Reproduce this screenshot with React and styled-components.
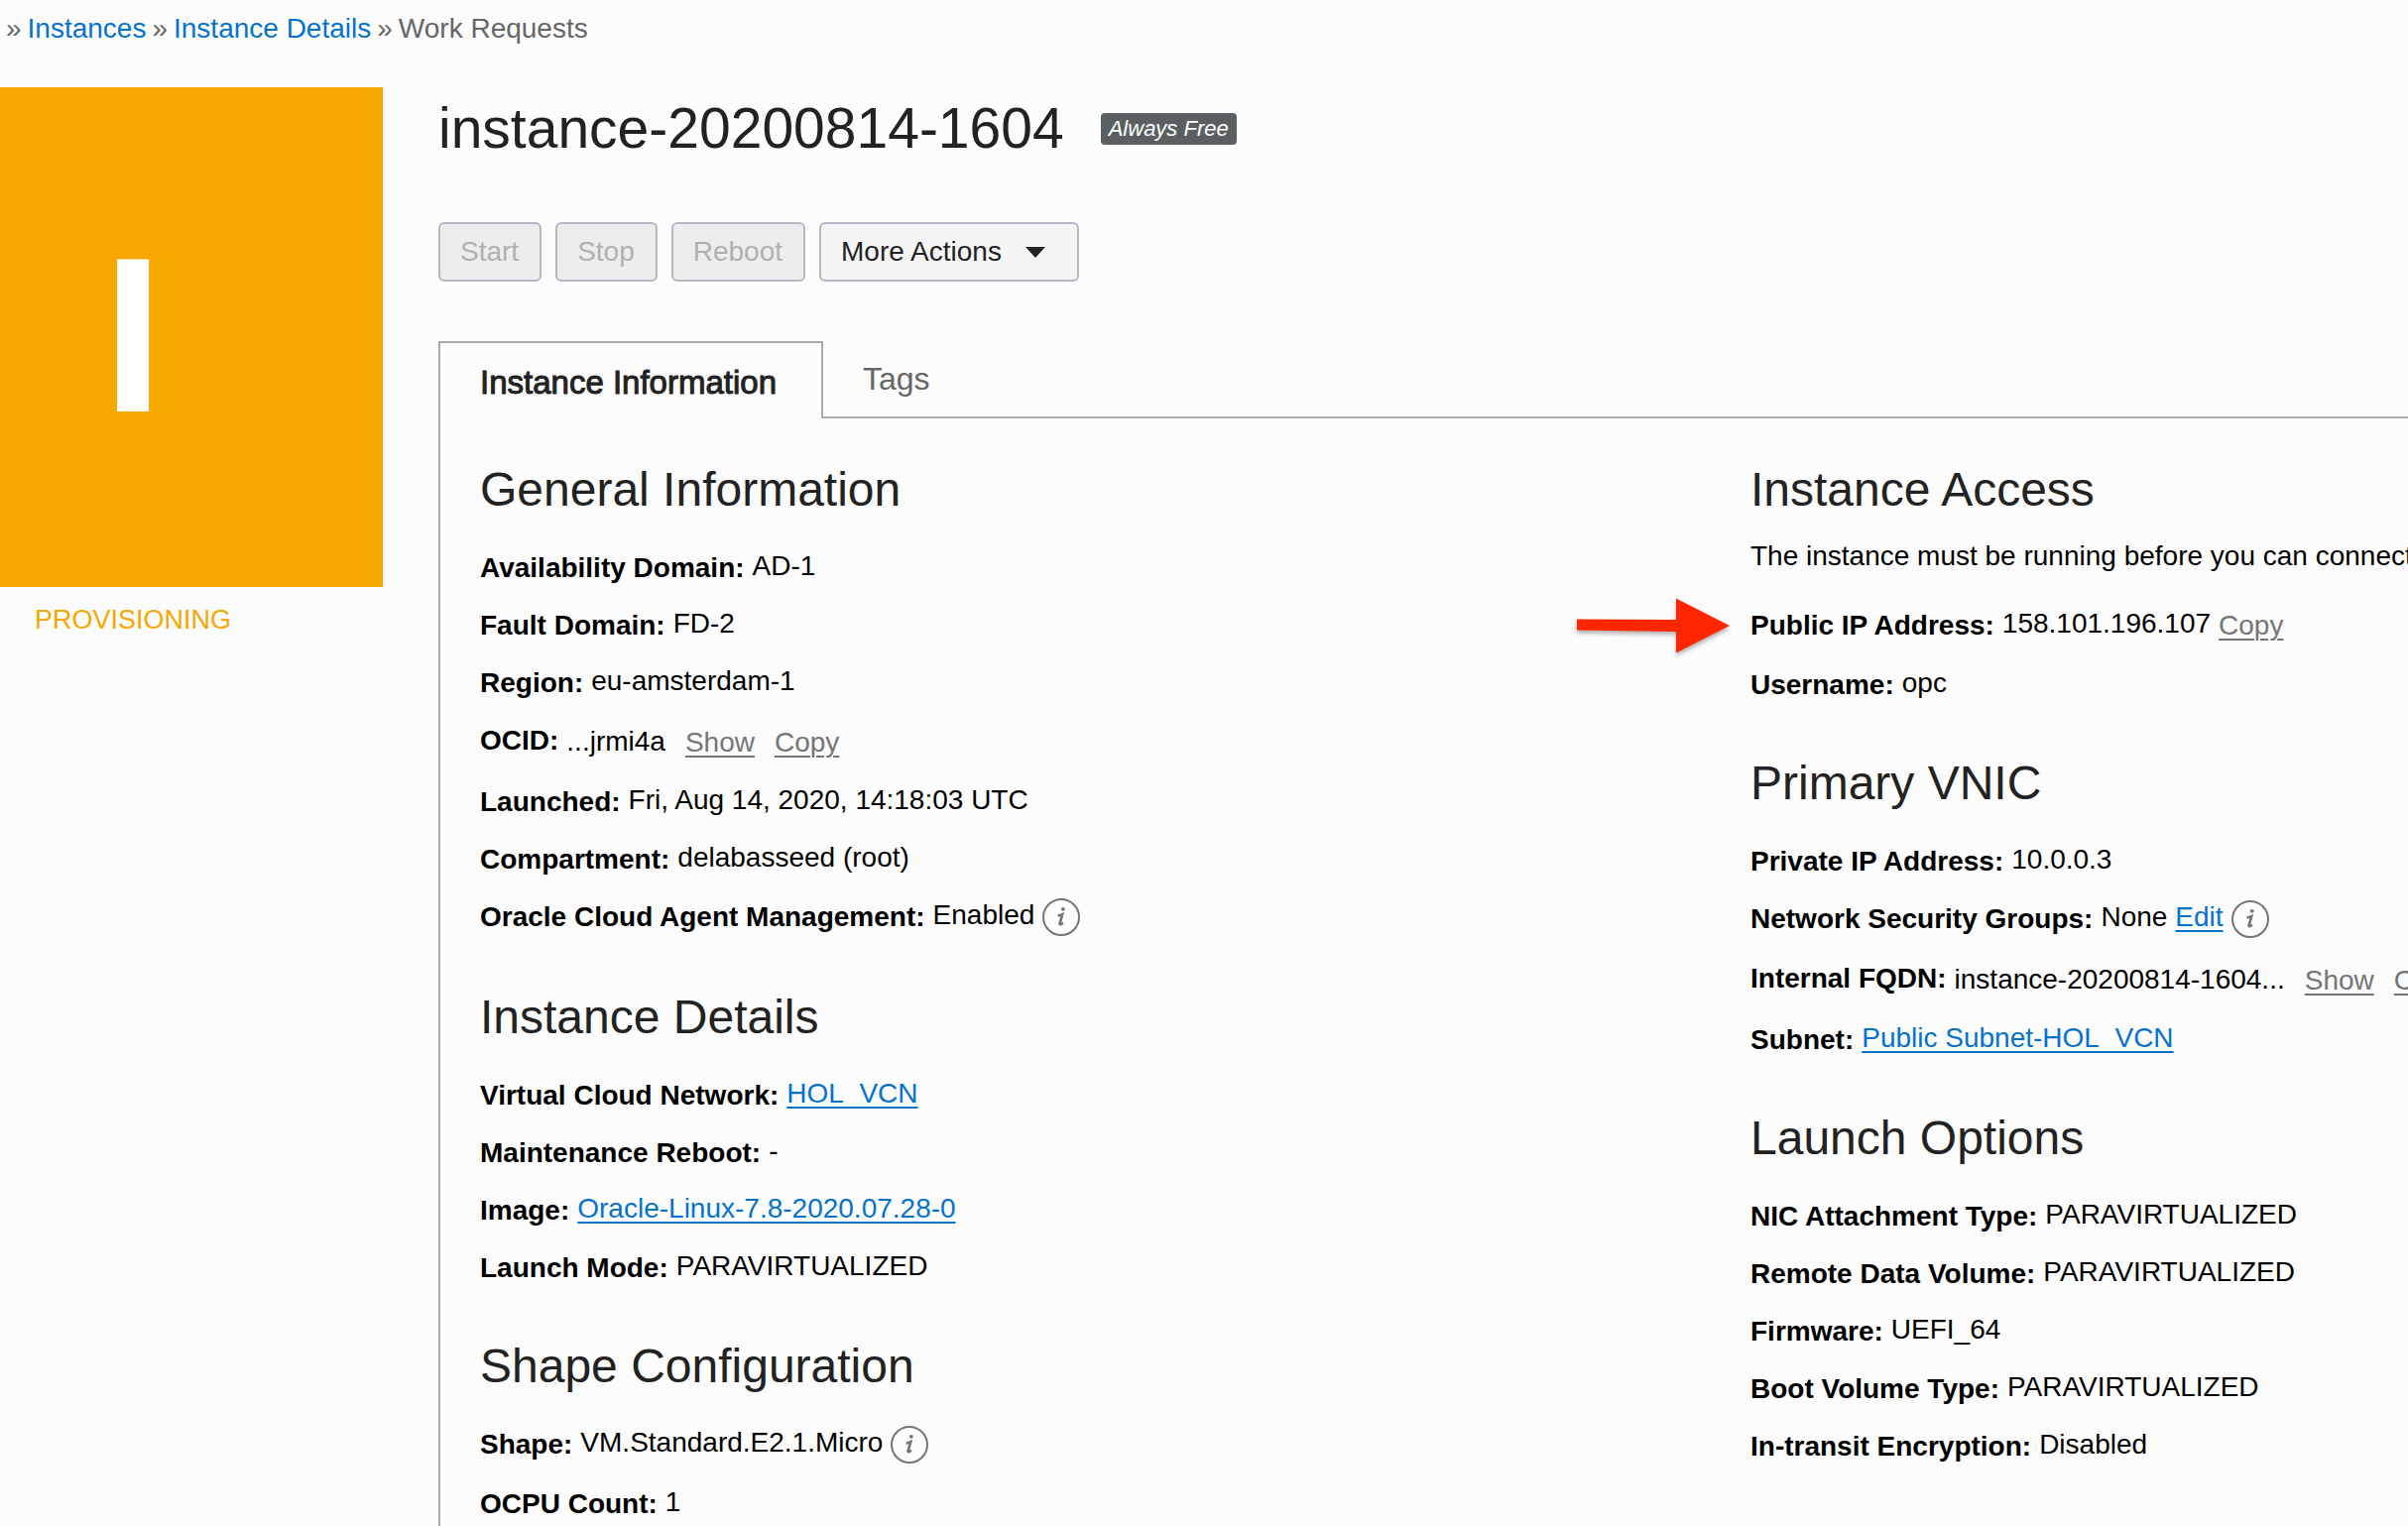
import React from "react";
import styled, { createGlobalStyle, css } from "styled-components";

const color = {
  page: "#fcfcfc",
  text: "#000000",
  heading: "#222222",
  muted: "#666666",
  action: "#757575",
  link: "#0572ce",
  line: "#aaaaaa",
  control: "#b2b9c3",
  provisioning: "#f6a700",
  arrow: "#ff2600",
};

const GlobalStyle = createGlobalStyle`
  *, *::before, *::after { box-sizing: border-box; }
  html { overflow: hidden; }
  body {
    margin: 0;
    background: ${color.page};
    color: ${color.text};
    font-family: "Liberation Sans", Arial, Helvetica, sans-serif;
    font-size: 28px;
    line-height: 32px;
    white-space: nowrap;
  }
  button { font: inherit; }
`;

const Breadcrumb = styled.nav`
  padding: 13px 6px 0;
  height: 88px;
  display: flex;
  gap: 6px;
  color: ${color.muted};
`;

const Crumb = styled.a`
  color: ${color.link};
  text-decoration: none;
`;

const Layout = styled.div`
  display: grid;
  grid-template-columns: 386px minmax(0, 1fr);
  column-gap: 56px;
`;

const StatusColumn = styled.aside`
  display: flex;
  flex-direction: column;
  gap: 17px;
`;

const StatusTile = styled.div`
  display: flex;
  align-items: center;
  justify-content: center;
  height: 504px;
  padding: 0 118px 4px 0;
  background: ${color.provisioning};
  color: #ffffff;
  font-size: 222px;
  font-weight: bold;
  line-height: 256px;
`;

const StatusText = styled.div`
  padding-right: 118px;
  color: ${color.provisioning};
  font-size: 27px;
  text-align: center;
`;

const TitleRow = styled.header`
  display: flex;
  align-items: center;
  gap: 37px;
  height: 84px;
`;

const Title = styled.h1`
  margin: 0;
  padding-bottom: 2px;
  color: ${color.heading};
  font-size: 57px;
  font-weight: normal;
  line-height: 64px;
`;

const Badge = styled.span`
  padding: 0 8px;
  border-radius: 4px;
  background: #5a5f62;
  color: #ffffff;
  font-size: 22px;
  font-style: italic;
  line-height: 32px;
`;

const Toolbar = styled.div`
  display: flex;
  gap: 14px;
  margin-top: 52px;
`;

const ToolButton = styled.button`
  display: flex;
  align-items: center;
  height: 60px;
  padding: 0 21px 0 20px;
  border: 2px solid ${color.control};
  border-radius: 6px;
  background: #f5f5f5;
  color: ${color.heading};

  &:disabled {
    background: #ededed;
    color: #b0b0b0;
  }
`;

const Caret = styled.svg`
  width: 20px;
  height: 11px;
  margin: 0 11px 0 24px;
`;

const TabList = styled.div`
  display: flex;
  margin-top: 60px;

  &::after {
    content: "";
    flex: 1;
    border-bottom: 2px solid ${color.line};
  }
`;

const Tab = styled.button`
  height: 78px;
  padding: 0 40px;
  border: 0 solid ${color.line};
  border-bottom-width: 2px;
  background: none;
  color: ${color.muted};
  font-size: 32px;

  ${(p) =>
    p.$selected &&
    css`
      padding: 4px 45px 0 40px;
      border-width: 2px 2px 0;
      color: ${color.heading};
      font-size: 33px;
      -webkit-text-stroke: 1px ${color.heading};
    `}
`;

const Panel = styled.div`
  display: grid;
  grid-template-columns: minmax(0, 1fr) 663px;
  padding: 44px 0 0 40px;
  border-left: 2px solid ${color.line};
`;

const Column = styled.div`
  display: flex;
  flex-direction: column;
  gap: 42px;
`;

const SectionTitle = styled.h2`
  margin: 0;
  color: ${color.heading};
  font-size: 48px;
  font-weight: normal;
  line-height: 56px;
`;

const Rows = styled.dl`
  margin: 0;
  padding-top: 22px;
`;

const Note = styled.p`
  margin: 0;
  padding-top: 23px;

  & + ${Rows} {
    padding-top: 25px;
  }
`;

const Row = styled.div`
  position: relative;
  display: flex;
  align-items: center;
  gap: 8px;
  height: ${(p) => 58 + p.$extra}px;
  padding-bottom: ${(p) => p.$extra}px;
`;

const Term = styled.dt`
  font-weight: bold;
`;

const Value = styled.dd`
  display: flex;
  align-items: center;
  gap: ${(p) => (p.$truncated ? 20 : 8)}px;
  margin: 0;
`;

const ValueText = styled.span`
  padding: ${(p) => (p.$truncated ? "2px 0 0" : "0 0 4px")};
`;

const Link = styled.a`
  padding-bottom: 4px;
  color: ${color.link};
  text-decoration: underline;
  text-decoration-thickness: 2px;
  text-underline-offset: 4px;
`;

const Action = styled.button`
  padding: ${(p) => (p.$truncated ? "4px 0 0" : "0")};
  border: 0;
  background: none;
  color: ${color.action};
  text-decoration: underline;
  text-decoration-thickness: 2px;
  text-underline-offset: 4px;
`;

const InfoButton = styled.button`
  display: flex;
  padding: 0;
  border: 0;
  background: none;
`;

const ArrowMark = styled.svg`
  position: absolute;
  right: calc(100% + 20px);
  top: -4px;
  width: 160px;
  height: 66px;
  filter: drop-shadow(0 3px 2px rgba(0, 0, 0, 0.3));
`;

const InfoIcon = () => (
  <svg width="38" height="38" viewBox="0 0 38 38" fill="none">
    <circle cx="19" cy="19" r="18" stroke={color.action} strokeWidth="2" />
    <circle cx="20.8" cy="10.8" r="1.9" fill={color.action} />
    <path
      d="M15.600 17.400c1.700 0 3.200-.5 4.600-1.200l-2.600 9.200c-.3 1.300.9 1.400 3.200-.8"
      stroke={color.action}
      strokeWidth="2.6"
    />
  </svg>
);

const Info = ({ about }) => (
  <InfoButton type="button" aria-label={`About ${about}`}>
    <InfoIcon />
  </InfoButton>
);

const Arrow = () => (
  <ArrowMark viewBox="0 0 160 66" aria-hidden="true">
    <path d="M5 26.500L105 27V5.500L159 33 105 60.500V39L5 37.500Z" fill={color.arrow} />
  </ArrowMark>
);

function Field({ label, text, link, actions = [], info, truncated, extra, pointed }) {
  const spare = extra ?? (truncated ? 4 : info ? 2 : 0);
  return (
    <Row $extra={spare}>
      {pointed && <Arrow />}
      <Term>{label}:</Term>
      <Value $truncated={truncated}>
        {text && <ValueText $truncated={truncated}>{text}</ValueText>}
        {link && <Link href="#">{link}</Link>}
        {actions.map((name) => (
          <Action key={name} type="button" $truncated={truncated}>
            {name}
          </Action>
        ))}
        {info && <Info about={label} />}
      </Value>
    </Row>
  );
}

function Section({ title, note, fields }) {
  return (
    <section>
      <SectionTitle>{title}</SectionTitle>
      {note && <Note>{note}</Note>}
      <Rows>
        {fields.map((field) => (
          <Field key={field.label} {...field} />
        ))}
      </Rows>
    </section>
  );
}

const leftSections = [
  {
    title: "General Information",
    fields: [
      { label: "Availability Domain", text: "AD-1" },
      { label: "Fault Domain", text: "FD-2" },
      { label: "Region", text: "eu-amsterdam-1" },
      { label: "OCID", text: "...jrmi4a", actions: ["Show", "Copy"], truncated: true },
      { label: "Launched", text: "Fri, Aug 14, 2020, 14:18:03 UTC" },
      { label: "Compartment", text: "delabasseed (root)" },
      { label: "Oracle Cloud Agent Management", text: "Enabled", info: true },
    ],
  },
  {
    title: "Instance Details",
    fields: [
      { label: "Virtual Cloud Network", link: "HOL_VCN" },
      { label: "Maintenance Reboot", text: "-" },
      { label: "Image", link: "Oracle-Linux-7.8-2020.07.28-0" },
      { label: "Launch Mode", text: "PARAVIRTUALIZED" },
    ],
  },
  {
    title: "Shape Configuration",
    fields: [
      { label: "Shape", text: "VM.Standard.E2.1.Micro", info: true },
      { label: "OCPU Count", text: "1" },
    ],
  },
];

const rightSections = [
  {
    title: "Instance Access",
    note: "The instance must be running before you can connect.",
    fields: [
      { label: "Public IP Address", text: "158.101.196.107", actions: ["Copy"], extra: 2, pointed: true },
      { label: "Username", text: "opc" },
    ],
  },
  {
    title: "Primary VNIC",
    fields: [
      { label: "Private IP Address", text: "10.0.0.3" },
      { label: "Network Security Groups", text: "None", link: "Edit", info: true },
      {
        label: "Internal FQDN",
        text: "instance-20200814-1604...",
        actions: ["Show", "Copy"],
        truncated: true,
      },
      { label: "Subnet", link: "Public Subnet-HOL_VCN" },
    ],
  },
  {
    title: "Launch Options",
    fields: [
      { label: "NIC Attachment Type", text: "PARAVIRTUALIZED" },
      { label: "Remote Data Volume", text: "PARAVIRTUALIZED" },
      { label: "Firmware", text: "UEFI_64" },
      { label: "Boot Volume Type", text: "PARAVIRTUALIZED" },
      { label: "In-transit Encryption", text: "Disabled" },
    ],
  },
];

export default function App() {
  return (
    <>
      <GlobalStyle />
      <Breadcrumb aria-label="Breadcrumb">
        <span>»</span>
        <Crumb href="#">Instances</Crumb>
        <span>»</span>
        <Crumb href="#">Instance Details</Crumb>
        <span>»</span>
        <span>Work Requests</span>
      </Breadcrumb>
      <Layout>
        <StatusColumn>
          <StatusTile>I</StatusTile>
          <StatusText>PROVISIONING</StatusText>
        </StatusColumn>
        <main>
          <TitleRow>
            <Title>instance-20200814-1604</Title>
            <Badge>Always Free</Badge>
          </TitleRow>
          <Toolbar>
            <ToolButton disabled>Start</ToolButton>
            <ToolButton disabled>Stop</ToolButton>
            <ToolButton disabled>Reboot</ToolButton>
            <ToolButton aria-haspopup="menu">
              More Actions
              <Caret viewBox="0 0 20 11" aria-hidden="true">
                <path d="M0 0H20L10 11Z" fill={color.heading} />
              </Caret>
            </ToolButton>
          </Toolbar>
          <TabList role="tablist">
            <Tab role="tab" aria-selected="true" $selected>
              Instance Information
            </Tab>
            <Tab role="tab" aria-selected="false">
              Tags
            </Tab>
          </TabList>
          <Panel role="tabpanel">
            <Column>
              {leftSections.map((section) => (
                <Section key={section.title} {...section} />
              ))}
            </Column>
            <Column>
              {rightSections.map((section) => (
                <Section key={section.title} {...section} />
              ))}
            </Column>
          </Panel>
        </main>
      </Layout>
    </>
  );
}
